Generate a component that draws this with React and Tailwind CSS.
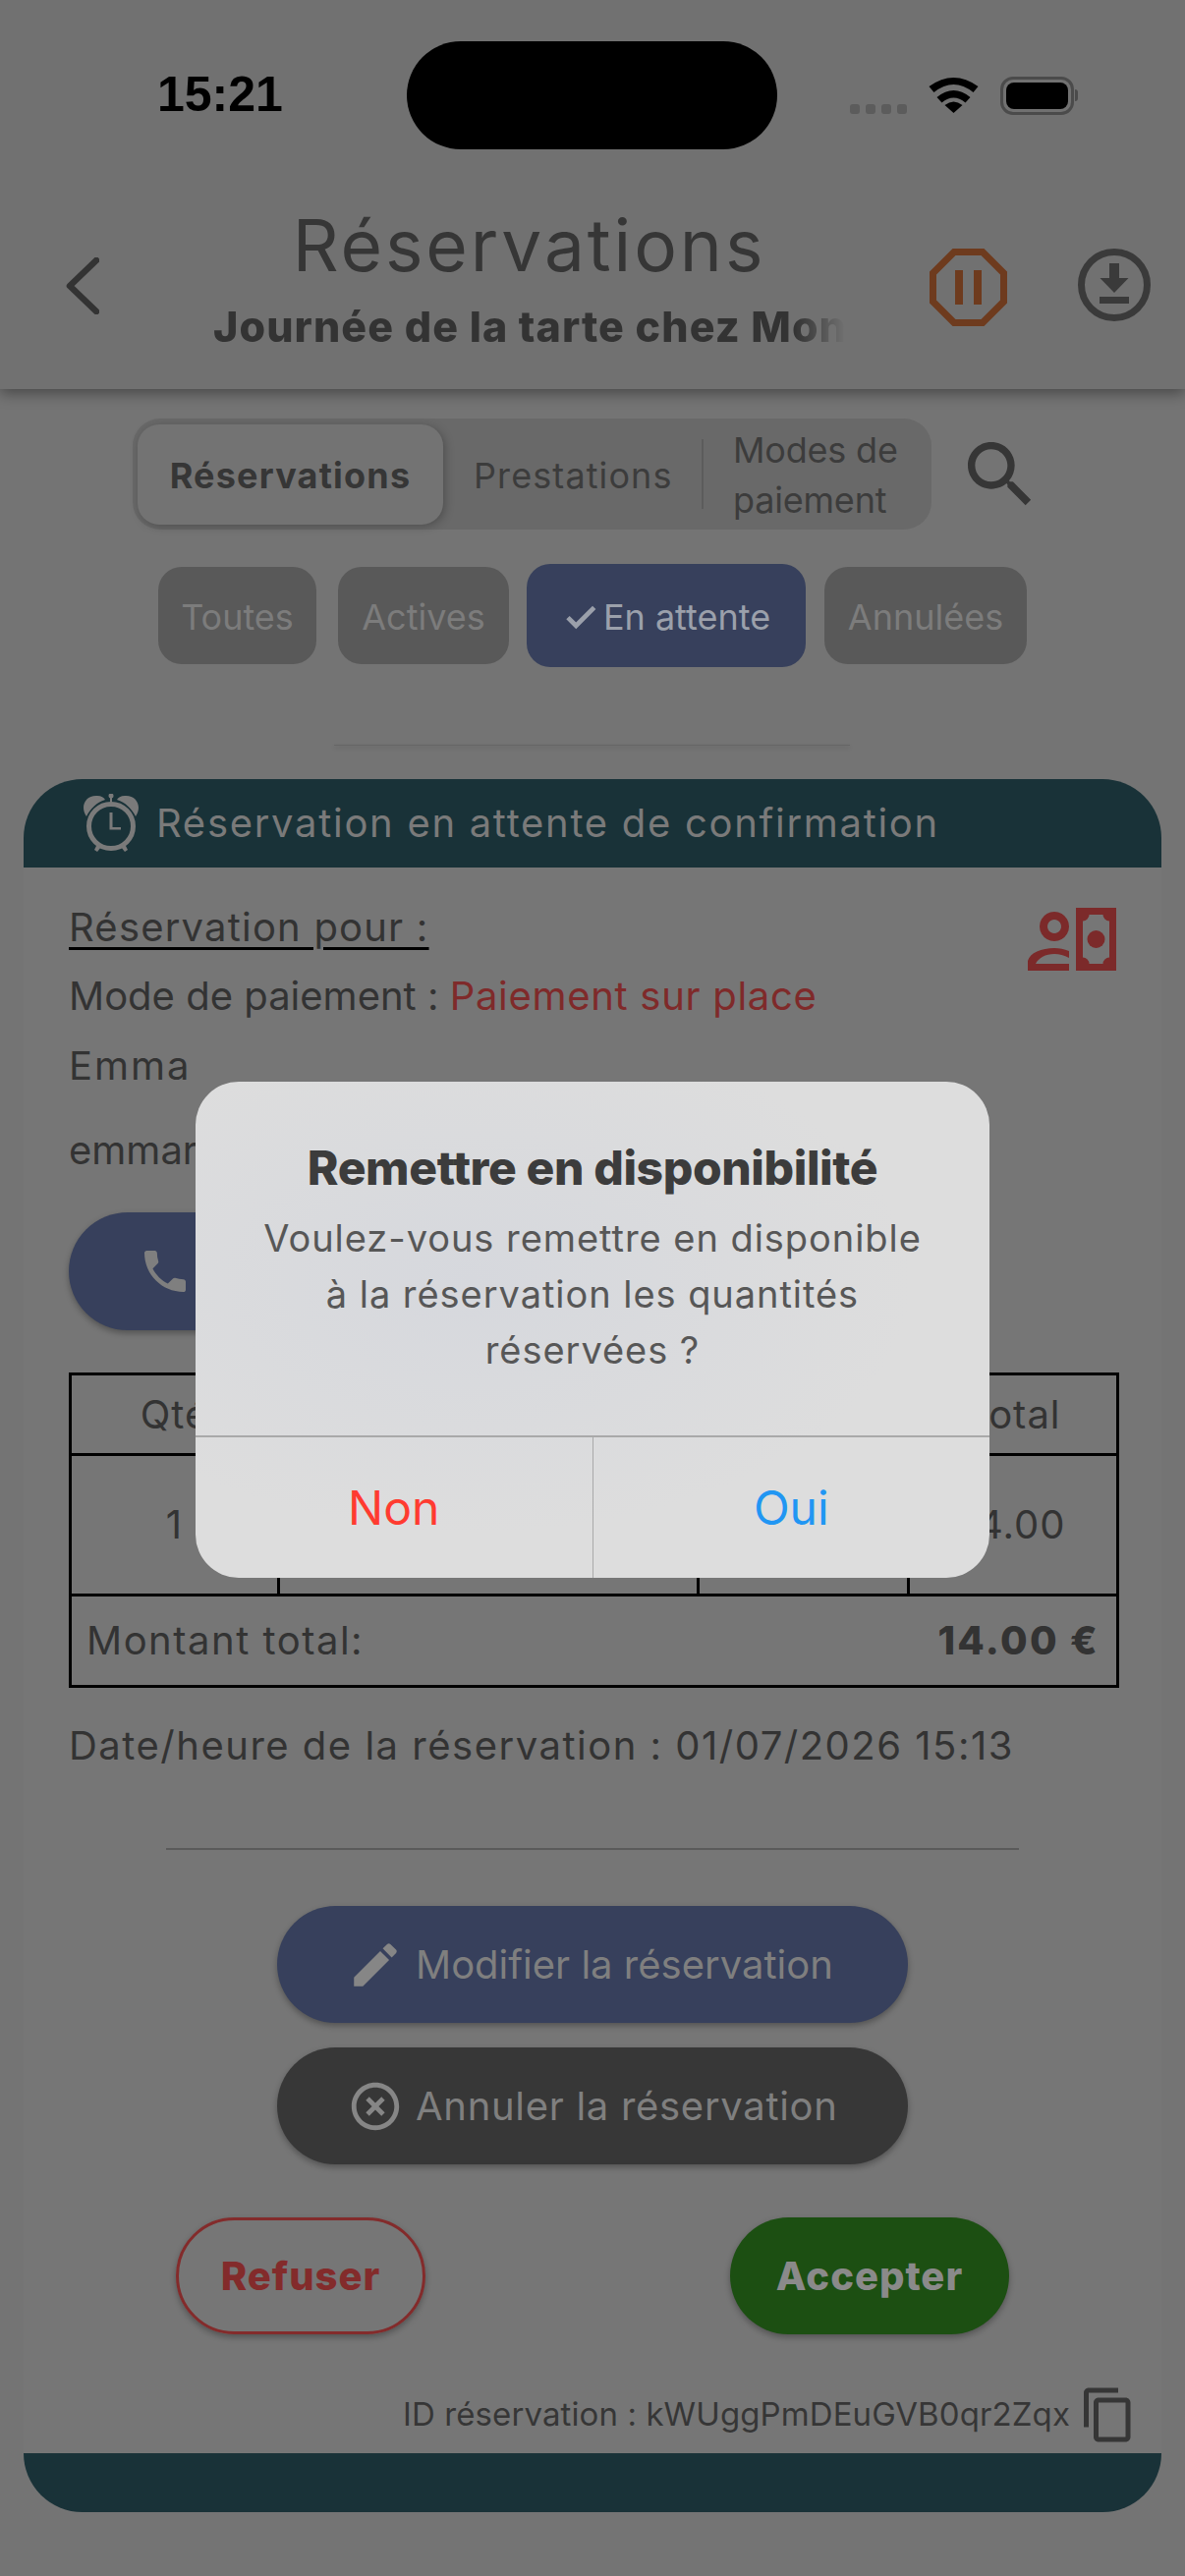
const body = { fontFamily: 'Inter, "Liberation Sans", sans-serif' };

function Mui({ d, className }) {
  return (
    <svg viewBox="0 0 24 24" fill="currentColor" className={className}>
      <path d={d} />
    </svg>
  );
}

const P = {
  phone: "M6.62 10.79c1.44 2.83 3.76 5.14 6.59 6.59l2.2-2.2c.27-.27.67-.36 1.02-.24 1.12.37 2.33.57 3.57.57.55 0 1 .45 1 1V20c0 .55-.45 1-1 1-9.39 0-17-7.61-17-17 0-.55.45-1 1-1h3.5c.55 0 1 .45 1 1 0 1.25.2 2.45.57 3.57.11.35.03.74-.25 1.02l-2.2 2.2z",
  edit: "M3 17.25V21h3.75L17.81 9.94l-3.75-3.75L3 17.25zM20.71 7.04c.39-.39.39-1.02 0-1.41l-2.34-2.34c-.39-.39-1.02-.39-1.41 0l-1.83 1.83 3.75 3.75 1.83-1.83z",
  cancel: "M14.59 8L12 10.59 9.41 8 8 9.41 10.59 12 8 14.59 9.41 16 12 13.41 14.59 16 16 14.59 13.41 12 16 9.41 14.59 8zM12 2C6.47 2 2 6.47 2 12s4.47 10 10 10 10-4.47 10-10S17.53 2 12 2zm0 18c-4.41 0-8-3.59-8-8s3.59-8 8-8 8 3.59 8 8-3.59 8-8 8z",
  copy: "M16 1H4c-1.1 0-2 .9-2 2v14h2V3h12V1zm3 4H8c-1.1 0-2 .9-2 2v14c0 1.1.9 2 2 2h11c1.1 0 2-.9 2-2V7c0-1.1-.9-2-2-2zm0 16H8V7h11v14z",
  search: "M15.5 14h-.79l-.28-.27C15.41 12.59 16 11.11 16 9.5 16 5.91 13.09 3 9.5 3S3 5.91 3 9.5 5.91 16 9.5 16c1.61 0 3.09-.59 4.23-1.57l.27.28v.79l5 4.99L20.49 19l-4.99-5zm-6 0C7.01 14 5 11.99 5 9.5S7.01 5 9.5 5 14 7.01 14 9.5 11.99 14 9.5 14z",
  check: "M9 16.17L4.83 12l-1.41 1.41L9 19 21 7l-1.41-1.41z",
};

function StatusBar() {
  return (
    <div className="flex h-[110px] items-center relative">
      <span className="ml-[160px] mt-[-2px] w-[125px] text-[50px] font-bold leading-none text-black" style={{ fontFamily: '"Liberation Sans", sans-serif' }}>15:21</span>
      <div className="ml-[129px] h-[110px] w-[377px] rounded-[55px] bg-black" />
      <div className="ml-[74px] mt-[28px] flex w-[58px] gap-[6px]">
        {[0, 1, 2, 3].map((i) => (
          <span key={i} className="h-[10px] w-[10px] shrink-0 rounded-[3px] bg-[#5c5c5c]" />
        ))}
      </div>
      <svg viewBox="0 0 50 38" className="ml-[22px] h-[38px] w-[51px]">
        <path d="M25 37 L16 29 Q25 22 34 29 Z" fill="#000" />
        <path d="M8 21 L13 26.500 Q25 16.500 37 26.500 L42 21 Q25 7 8 21 Z" fill="#000" />
        <path d="M0 10 L5 16 Q25 0 45 16 L50 10 Q25 -8 0 10 Z" fill="#000" />
      </svg>
      <div className="ml-[22px] flex items-center">
        <div className="flex h-[39px] w-[75px] items-center justify-center rounded-[13px] border-[3px] border-[#4b4b4b]">
          <div className="h-[27px] w-[63px] rounded-[8px] bg-black" />
        </div>
        <div className="ml-[1px] h-[12px] w-[3px] rounded-r-full bg-[#4b4b4b]" />
      </div>
    </div>
  );
}

function Header() {
  return (
    <header className="relative z-10 h-[396px] shrink-0 bg-[#717171] pt-[42px] shadow-[0_4px_14px_rgba(0,0,0,0.4)]">
      <StatusBar />
      <div className="flex items-start">
        <svg viewBox="0 0 34 58" className="ml-[67px] mt-[110px] h-[58px] w-[34px]" fill="none" stroke="#333333" strokeWidth="6.500" strokeLinecap="round" strokeLinejoin="round">
          <path d="M31 3 L4 29 L31 55" />
        </svg>
        <div className="ml-[116px] mt-[58px] flex w-[643px] flex-col items-center">
          <h1 className="text-[73px] font-normal leading-[80px] tracking-[2.9px] text-[#363636]" style={body}>Réservations</h1>
          <div className="mt-[17px] w-[643px] overflow-hidden whitespace-nowrap text-[43px] font-extrabold leading-[50px] tracking-[1.1px] text-[#333] [mask-image:linear-gradient(to_right,black_92%,transparent_100%)]" style={body}>
            Journée de la tarte chez Mon
          </div>
        </div>
        <svg viewBox="0 0 79 79" className="ml-[86px] mt-[101px] h-[79px] w-[79px]">
          <path d="M25 3.500 H54 L75.500 25 V54 L54 75.500 H25 L3.500 54 V25 Z" fill="none" stroke="#6e3b1e" strokeWidth="7" />
          <rect x="26" y="22" width="8" height="35" fill="#6e3b1e" />
          <rect x="45" y="22" width="8" height="35" fill="#6e3b1e" />
        </svg>
        <svg viewBox="0 0 74 74" className="ml-[72px] mt-[101px] h-[74px] w-[74px]">
          <circle cx="37" cy="37" r="33.500" fill="none" stroke="#3a3a3a" strokeWidth="7" />
          <path d="M32 15 H42 V30 H51.500 L37 45 L22.500 30 H32 Z" fill="#3a3a3a" />
          <rect x="22" y="49" width="30" height="7" fill="#3a3a3a" />
        </svg>
      </div>
    </header>
  );
}

function Tabs() {
  return (
    <div className="mt-[30px] flex items-center" style={body}>
      <div className="ml-[135px] flex h-[113px] w-[813px] items-center rounded-[28px] bg-[#696969] pl-[5px]">
        <div className="flex h-[102px] w-[311px] items-center justify-center rounded-[22px] bg-[#737373] pt-[3px] text-[36px] font-bold tracking-[1.2px] text-[#363636] shadow-[2px_2px_10px_rgba(0,0,0,0.25)]">
          Réservations
        </div>
        <span className="ml-[31px] mt-[3px] w-[200px] text-[36px] tracking-[1.1px] text-[#3c3c3c]">Prestations</span>
        <span className="ml-[32px] h-[71px] w-[2px] bg-[#5c5c5c]" />
        <span className="ml-[30px] mt-[3px] w-[172px] text-[36px] leading-[51px] tracking-[-0.2px] text-[#3c3c3c]">Modes de paiement</span>
      </div>
      <Mui d={P.search} className="ml-[26px] h-[88px] w-[88px] text-[#363636]" />
    </div>
  );
}

function Chip({ children, w }) {
  return (
    <div className={`flex h-[99px] items-center justify-center rounded-[24px] bg-[#595959] pt-[2px] text-[36px] text-[#7c7c7c] ${w}`}>
      {children}
    </div>
  );
}

function Chips() {
  return (
    <div className="ml-[161px] mt-[35px] flex items-center" style={body}>
      <Chip w="w-[161px]">Toutes</Chip>
      <div className="w-[22px]" />
      <Chip w="w-[174px]">Actives</Chip>
      <div className="w-[18px]" />
      <div className="flex h-[105px] w-[284px] items-center justify-center gap-[4px] rounded-[24px] bg-[#37405c] pt-[2px] text-[36px] text-[#9ba0ab]">
        <Mui d={P.check} className="h-[38px] w-[38px] stroke-current stroke-[1]" />
        En attente
      </div>
      <div className="w-[19px]" />
      <Chip w="w-[206px]">Annulées</Chip>
    </div>
  );
}

function Alarm() {
  return (
    <svg viewBox="85 809 58 60" className="h-[60px] w-[58px] shrink-0" fill="#7a7a7a">
      <path d="M89 832 C82 822 88 810 100 811 C104 811 107 813 108 815 C99 818 93 824 89 832 Z" />
      <path d="M139 832 C146 822 140 810 128 811 C124 811 121 813 120 815 C129 818 135 824 139 832 Z" />
      <circle cx="114" cy="811" r="2.500" />
      <rect x="113" y="811" width="2" height="7" />
      <circle cx="114" cy="842" r="22.500" fill="none" stroke="#7a7a7a" strokeWidth="5" />
      <path d="M112.500 828 H115.500 V843 H124 V845.500 H112.500 Z" />
      <path d="M100 860 L104 863 L100 868 L97 866 Z" />
      <path d="M128 860 L124 863 L128 868 L131 866 Z" />
    </svg>
  );
}

function PayIcon() {
  return (
    <svg viewBox="0 0 90 64" className="mt-[5px] h-[64px] w-[90px]" fill="#7c2a2a">
      <path fillRule="evenodd" d="M27 4 a15 15 0 1 0 0.010 0 Z M27 12 a7 7 0 1 1 -0.010 0 Z" />
      <path d="M0 64 V54 C2 46 14 41 27 41 C32 41 37 42 42 44 V51 C37 48.500 32 47 27 47 C18 47 11 51 8 57 H42 V64 Z" />
      <path fillRule="evenodd" d="M49 0 H90 V64 H49 Z M62.500 7 H76.500 A6.500 6.500 0 0 0 83 13.500 V50.500 A6.500 6.500 0 0 0 76.500 57 H62.500 A6.500 6.500 0 0 0 56 50.500 V13.500 A6.500 6.500 0 0 0 62.500 7 Z" />
      <circle cx="69.500" cy="32" r="9" />
    </svg>
  );
}

function Pill({ bg, icon, children }) {
  return (
    <div className={`flex h-[119px] w-[642px] items-center gap-[12px] rounded-[60px] pl-[71px] text-[40px] text-[#7f7f7f] shadow-[0_3px_6px_rgba(0,0,0,0.3)] ${bg}`}>
      {icon}
      {children}
    </div>
  );
}

function Table() {
  const cell = "border-[3px] border-black";
  return (
    <table className="mt-[43px] w-[1066px] table-fixed border-collapse text-[40px] tracking-[1px] text-[#333]">
      <colgroup>
        <col className="w-[212px]" />
        <col className="w-[427px]" />
        <col className="w-[214px]" />
        <col className="w-[213px]" />
      </colgroup>
      <tbody>
        <tr className="h-[82px] text-center">
          <td className={cell}>Qté</td>
          <td className={cell}></td>
          <td className={cell}></td>
          <td className={cell}>Total</td>
        </tr>
        <tr className="h-[143px] text-center">
          <td className={cell}>1</td>
          <td className={cell}></td>
          <td className={cell}></td>
          <td className={cell}>14.00</td>
        </tr>
        <tr className="h-[93px]">
          <td colSpan="4" className={cell}>
            <div className="flex justify-between pl-[15px] pr-[17px]">
              <span className="tracking-[1.5px]">Montant total:</span>
              <span className="font-extrabold tracking-[2.3px]">14.00 €</span>
            </div>
          </td>
        </tr>
      </tbody>
    </table>
  );
}

function Card() {
  return (
    <section className="mx-[24px] mt-[114px] flex h-[1764px] flex-col rounded-[60px] bg-[#767676]" style={body}>
      <div className="flex h-[90px] shrink-0 items-center gap-[17px] rounded-t-[60px] bg-[#193238] pl-[60px] text-[40px] tracking-[1.7px] text-[#7a7a7a]">
        <Alarm />
        <span>Réservation en attente de confirmation</span>
      </div>
      <div className="flex flex-1 flex-col px-[46px] text-[40px] text-[#333]">
        <div className="flex items-start justify-between pt-[36px]">
          <div className="flex flex-col">
            <div className="h-[70px] leading-[50px] tracking-[1.2px]"><span className="underline decoration-black decoration-[3px] underline-offset-[6px]">Réservation pour :</span></div>
            <div className="h-[71px] leading-[50px]">Mode de paiement : <span className="tracking-[0.7px] text-[#7f2a2a]">Paiement sur place</span></div>
            <div className="h-[86px] leading-[50px] tracking-[2px]">Emma</div>
            <div className="h-[65px] leading-[50px]">emmar</div>
          </div>
          <PayIcon />
        </div>
        <div className="mt-[23px] flex h-[120px] w-[500px] items-center rounded-[60px] bg-[#37405c] pl-[70px] text-[#7f7f7f] shadow-[0_3px_6px_rgba(0,0,0,0.3)]">
          <Mui d={P.phone} className="h-[56px] w-[56px]" />
        </div>
        <Table />
        <div className="mt-[34px] leading-[50px] tracking-[1.5px]">Date/heure de la réservation : 01/07/2026 15:13</div>
        <div className="mx-auto mt-[79px] h-[2px] w-[868px] shrink-0 bg-[#5a5a5a]" />
        <div className="mt-[57px] flex flex-col items-center gap-[25px]">
          <Pill bg="bg-[#37405c]" icon={<Mui d={P.edit} className="h-[58px] w-[58px] shrink-0 text-[#868686]" />}>Modifier la réservation</Pill>
          <Pill bg="bg-[#373737]" icon={<Mui d={P.cancel} className="h-[58px] w-[58px] shrink-0 text-[#868686]" />}><span className="tracking-[0.7px]">Annuler la réservation</span></Pill>
        </div>
        <div className="mt-[54px] flex justify-between px-[109px]">
          <div className="flex h-[119px] w-[254px] items-center justify-center rounded-[60px] border-[3px] border-[#832b2b] text-[40px] font-extrabold tracking-[1px] text-[#832b2b] shadow-[0_3px_6px_rgba(0,0,0,0.3)]">Refuser</div>
          <div className="flex h-[119px] w-[284px] items-center justify-center rounded-[60px] bg-[#1c4f12] text-[40px] font-extrabold tracking-[1px] text-[#8a8a8a] shadow-[0_3px_6px_rgba(0,0,0,0.3)]">Accepter</div>
        </div>
        <div className="mt-[52px] flex items-center justify-end gap-[9px] text-[33px] tracking-[0.1px] text-[#363636]">
          <span>ID réservation : kWUggPmDEuGVB0qr2Zqx</span>
          <Mui d={P.copy} className="mr-[-22px] h-[60px] w-[60px] shrink-0 text-[#363636]" />
        </div>
      </div>
      <div className="h-[60px] shrink-0 rounded-b-[60px] bg-[#193238]" />
    </section>
  );
}

function Dialog() {
  return (
    <div className="absolute left-[199px] top-[1101px] z-20 flex h-[505px] w-[808px] flex-col overflow-hidden rounded-[44px] bg-[radial-gradient(ellipse_at_35%_40%,#d6d8dd,#dddddd_60%)]" style={body}>
      <div className="flex h-[360px] flex-col items-center pt-[56px]">
        <h2 className="text-[48px] font-extrabold leading-[64px] tracking-[-0.4px] text-[#3c3c3c]">Remettre en disponibilité</h2>
        <p className="mt-[11px] text-center text-[38px] leading-[57px] tracking-[0.95px] text-[#575757]">
          Voulez-vous remettre en disponible<br />à la réservation les quantités<br />réservées ?
        </p>
      </div>
      <div className="flex flex-1 border-t-[2px] border-[#a9a9a9] text-[48px]">
        <div className="flex flex-1 items-center justify-center text-[#ff3b30]">Non</div>
        <div className="w-[1px] bg-[#a9a9a9]" />
        <div className="flex flex-1 items-center justify-center text-[#2196f3]">Oui</div>
      </div>
    </div>
  );
}

export default function App() {
  return (
    <div className="relative flex h-[2622px] w-[1206px] flex-col overflow-hidden bg-[#747474]">
      <Header />
      <Tabs />
      <Chips />
      <div className="absolute left-[340px] top-[758px] h-[1px] w-[525px] bg-[#666666] shadow-[0_2px_4px_rgba(0,0,0,0.2)]" />
      <Card />
      <Dialog />
    </div>
  );
}
